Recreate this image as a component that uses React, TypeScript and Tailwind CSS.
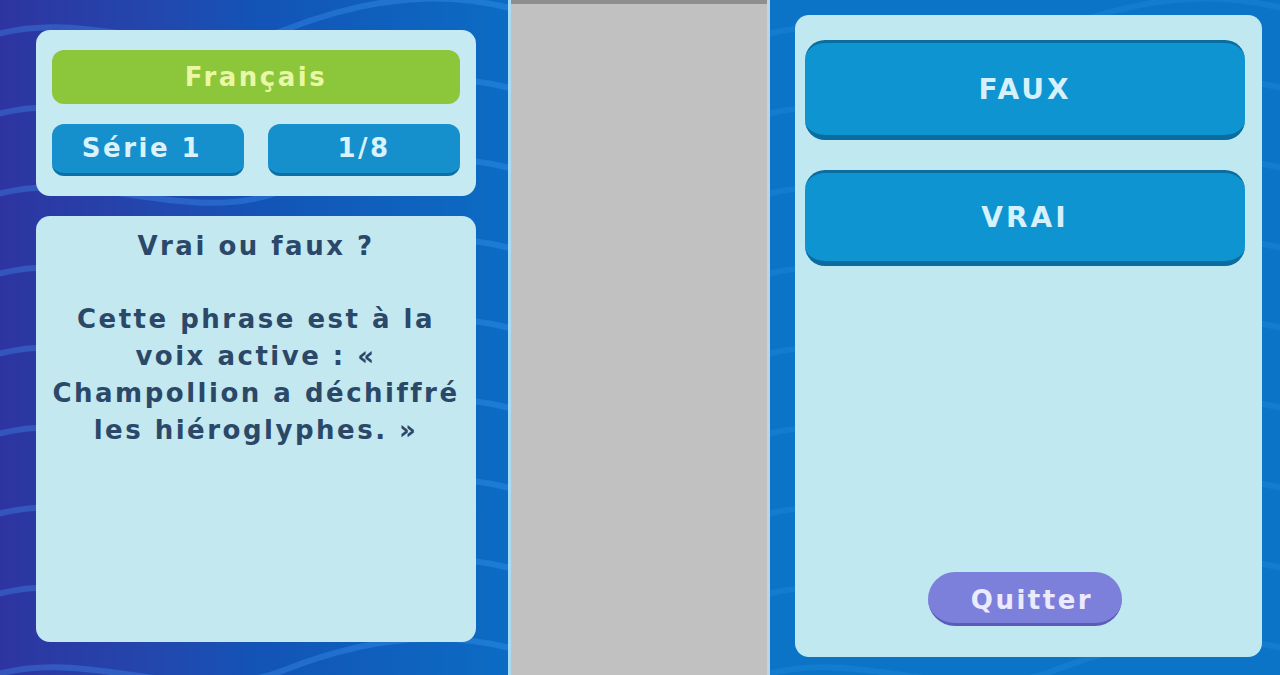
const font = "font-['DejaVu_Sans',Verdana,sans-serif] font-bold tracking-[2.5px]"

function Waves({ color }: { color: string }) {
    // decorative wave lines across the screen background
    const rows = [40, 120, 200, 280, 360, 440, 520, 600, 680]
    return (
        <svg className="absolute inset-0 h-full w-full" preserveAspectRatio="none" viewBox="0 0 500 675">
            {rows.map((y) => (
                <path
                    key={y}
                    d={`M-20 ${y} C 80 ${y - 40}, 180 ${y + 30}, 280 ${y - 10} S 460 ${y - 50}, 540 ${y - 20}`}
                    stroke={color}
                    strokeWidth="6"
                    fill="none"
                    opacity="0.3"
                />
            ))}
        </svg>
    )
}

function Pill({ children, className = "" }: { children: React.ReactNode; className?: string }) {
    return (
        <div
            className={`flex items-center justify-center rounded-[12px] bg-[#1590cd] border-b-[3px] border-[#0c6fa6] text-[#d9f2fb] text-[26px] ${className}`}
        >
            {children}
        </div>
    )
}

function BigButton({ label, h }: { label: string; h: string }) {
    return (
        <div
            className={`flex items-center justify-center rounded-[20px] bg-[#0e94d0] border-t-[3px] border-b-[5px] border-[#0a6c9f] text-[#d6f1fb] text-[28px] tracking-[3px] ${h}`}
        >
            <span className="mt-[2px]">{label}</span>
        </div>
    )
}

export default function App() {
    return (
        <div className={`flex h-[675px] w-[1280px] overflow-hidden ${font}`}>
            {/* left screen */}
            <div className="relative flex w-[508px] flex-col gap-[20px] bg-gradient-to-r from-[#2d34a0] via-[#1353b6] to-[#0b6cc4] pl-[36px] pr-[32px] pt-[30px] pb-[33px]">
                <Waves color="#4aa0ff" />
                <div className="relative flex h-[166px] flex-col gap-[20px] rounded-[14px] bg-[#c5eaf2] px-[16px] pt-[20px]">
                    <div className="flex h-[54px] items-center justify-center rounded-[12px] bg-[#8cc63a] text-[26px] text-[#e9f7a6]">
                        Français
                    </div>
                    <div className="flex gap-[24px]">
                        <Pill className="h-[52px] w-[192px] pr-[12px]">Série 1</Pill>
                        <Pill className="h-[52px] flex-1">1/8</Pill>
                    </div>
                </div>
                <div className="relative flex-1 rounded-[14px] bg-[#c3e8f0] pt-[12px] text-center text-[26px] leading-[37px] text-[#2b4868]">
                    <p>Vrai ou faux ?</p>
                    <p className="mt-[36px]">
                        Cette phrase est à la
                        <br />
                        voix active : «
                        <br />
                        Champollion a déchiffré
                        <br />
                        les hiéroglyphes. »
                    </p>
                </div>
            </div>

            {/* gap between screens */}
            <div className="flex w-[262px] flex-col border-l-[3px] border-r-[3px] border-l-[#a8dcf2] border-r-[#b9d6e6] bg-[#c1c1c1]">
                <div className="h-[4px] bg-[#8e8e8e]" />
            </div>

            {/* right screen */}
            <div className="relative flex flex-1 bg-[#0b74c6] pl-[25px] pr-[18px] pt-[15px] pb-[18px]">
                <Waves color="#2a8fe0" />
                <div className="relative flex flex-1 flex-col rounded-[14px] bg-[#c0e8f0] pl-[10px] pr-[17px] pt-[25px] pb-[31px]">
                    <BigButton label="FAUX" h="h-[100px]" />
                    <div className="h-[30px]" />
                    <BigButton label="VRAI" h="h-[96px]" />
                    <div className="flex-1" />
                    <div className="mx-auto flex h-[54px] w-[194px] items-center justify-center rounded-full border-b-[3px] border-[#5a5cb8] bg-[#7d80da] pl-[14px] pt-[6px] text-[26px] text-[#eceaff]">
                        Quitter
                    </div>
                </div>
            </div>
        </div>
    )
}
